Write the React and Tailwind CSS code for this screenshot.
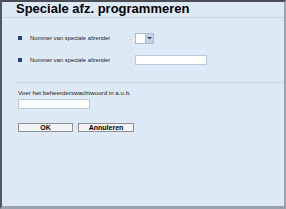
import React from 'react';

const Row = ({ children, field }) => (
  <div className="flex items-center h-[12px]">
    <span className="w-[4px] h-[4px] bg-[#28407a] ml-[16px] mr-[8px]" />
    <span className="w-[100px] text-[5.8px] text-[#1a1a1a] whitespace-nowrap">{children}</span>
    <span className="text-[6.5px] text-[#999] w-[5px]">:</span>
    {field}
  </div>
);

export default function App() {
  return (
    <div className="w-[286px] h-[209px] bg-[#dee9f6] border-t-2 border-t-[#4a4d55] border-l-2 border-l-[#55585f] border-r-2 border-r-[#9aa3ae] border-b-[3px] border-b-[#9aa3ae] overflow-hidden" style={{ fontFamily: '"Liberation Sans", Arial, sans-serif' }}>
      <div className="h-[16px] border-b border-[#c9d5e3] flex items-end pb-[2px] pl-[14px]">
        <span className="text-[13px] font-bold text-black leading-none">Speciale afz. programmeren</span>
      </div>
      <div className="pt-[14px] flex flex-col gap-[10px]">
        <Row
          field={
            <div className="flex h-[11px] border border-[#aab9d4] bg-white">
              <div className="w-[9px]" />
              <div className="w-[8px] bg-[#c5d3ea] border-l border-[#aab9d4] flex items-center justify-center">
                <svg width="5" height="4" viewBox="0 0 5 4"><path d="M0 1h5L2.5 3.5z" fill="#2b3f6e" /></svg>
              </div>
            </div>
          }
        >
          Nummer van speciale afzender
        </Row>
        <Row field={<div className="w-[72px] h-[10px] border border-[#b8c9df] bg-white" />}>
          Nummer van speciale afzender
        </Row>
      </div>
      <div className="mt-[16px] ml-[14px] border-t border-[#c9d5e3]" />
      <div className="pl-[16px] pt-[7px]">
        <div className="text-[6.2px] text-[#1a1a1a] leading-none">Voer het beheerderswachtwoord in a.u.b.</div>
        <div className="mt-[3px] w-[72px] h-[10px] border border-[#b8c9df] bg-white" />
        <div className="mt-[14px] flex gap-[5px]">
          <button className="w-[55px] h-[9px] border border-[#8a8f99] bg-[#f4f4f4] text-[7px] font-bold leading-none text-black">OK</button>
          <button className="w-[56px] h-[9px] border border-[#8a8f99] bg-[#f4f4f4] text-[7px] font-bold leading-none text-black">Annuleren</button>
        </div>
      </div>
    </div>
  );
}
